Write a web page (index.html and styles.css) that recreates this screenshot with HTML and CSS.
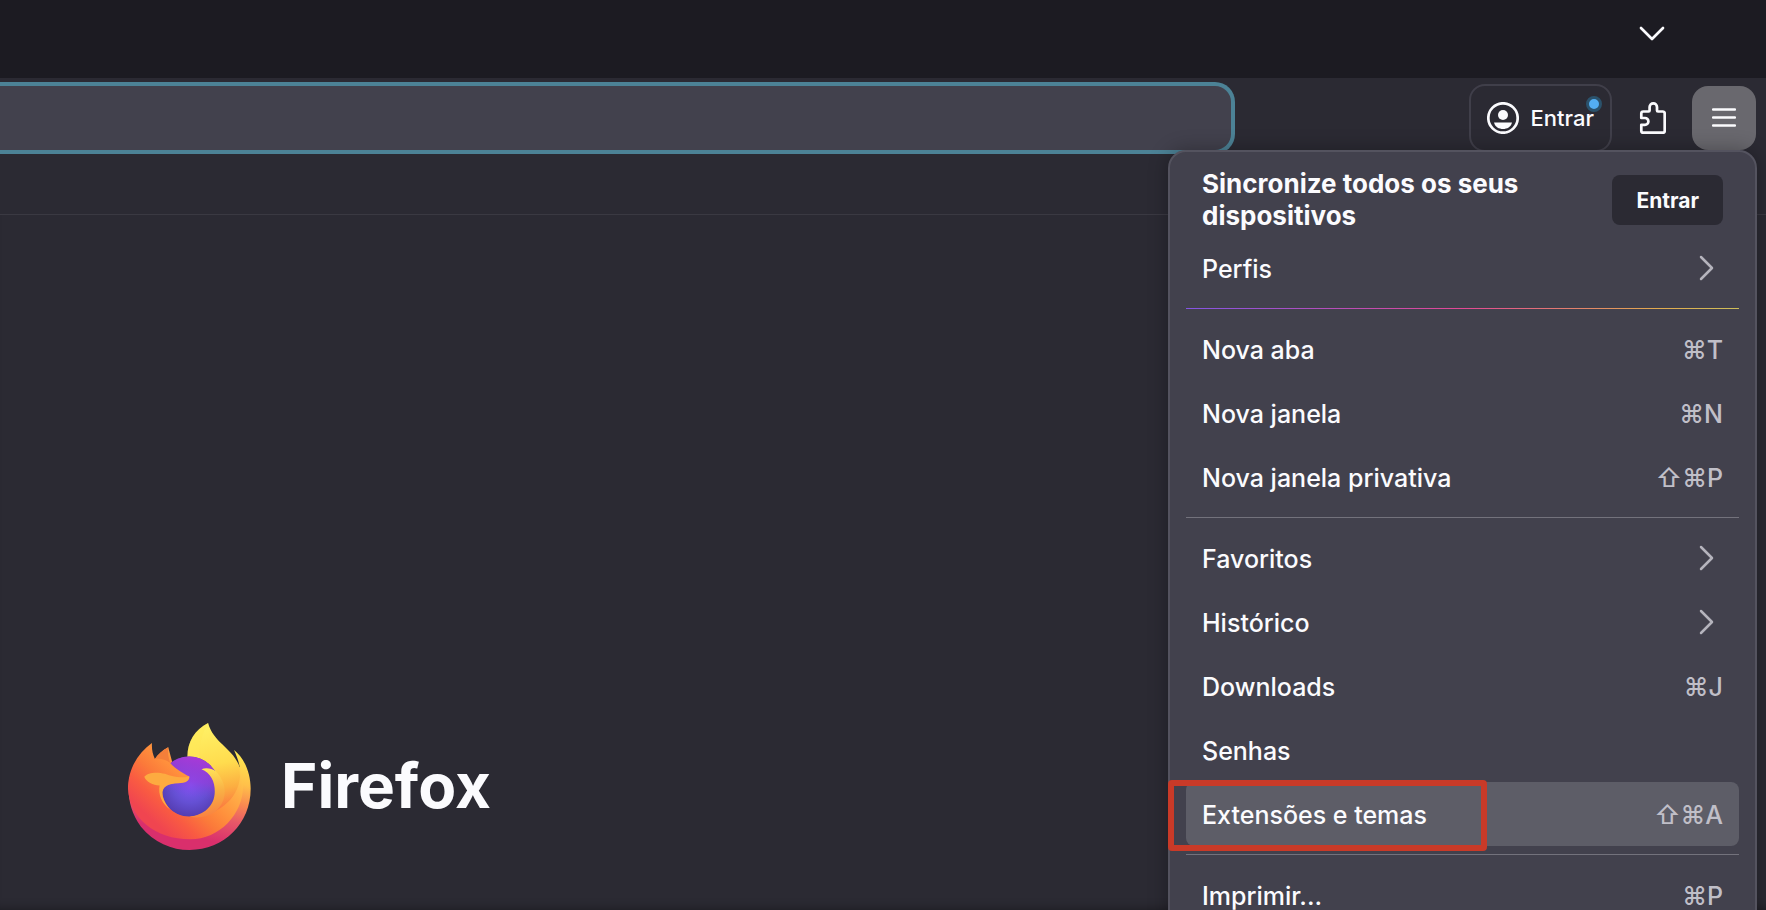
FILE: index.html
```html
<!DOCTYPE html>
<html lang="pt-BR">

<head>
    <meta charset="UTF-8">
    <meta name="viewport" content="width=device-width, initial-scale=1.0">
    <title>Firefox</title>
    <link rel="stylesheet" href="styles.css">
</head>

<body>
    <div class="tab-strip">
        <button class="toolbar-btn" aria-label="Listar abas">
            <svg width="26" height="16" viewBox="0 0 26 16"><path d="M2 2 L13 13 L24 2" class="line" /></svg>
        </button>
    </div>

    <div class="nav-bar">
        <input class="urlbar" type="text" aria-label="Endereço">
        <button class="signin">
            <svg width="32" height="32" viewBox="0 0 32 32">
                <circle cx="16" cy="16" r="14.7" class="line" />
                <circle cx="16" cy="13" r="5" fill="#fbfbfe" />
                <path d="M7 20.5 H25 C24 25 20 27 16 27 C12 27 8 25 7 20.5 Z" fill="#fbfbfe" />
            </svg>
            <span>Entrar</span>
            <i class="dot"></i>
        </button>
        <button class="toolbar-btn" aria-label="Extensões">
            <svg width="28" height="34" viewBox="0 0 28 34">
                <path d="M3.3 17 V12.5 Q3.3 10.5 5.3 10.5 H10.6 Q11.6 10.5 11.6 9.5 V6 A3.7 3.7 0 0 1 19 6 V9.5 Q19 10.5 20 10.5 H24.7 Q26.7 10.5 26.7 12.5 V29.7 Q26.7 31.7 24.7 31.7 H5.3 Q3.3 31.7 3.3 29.7 V23.8 H7 A3.4 3.4 0 0 0 7 17 Z" class="line" />
            </svg>
        </button>
        <button class="toolbar-btn open" aria-label="Menu">
            <svg width="24" height="20" viewBox="0 0 24 20"><path d="M1 1.5 H23 M1 9.5 H23 M1 17.5 H23" class="line thin" /></svg>
        </button>
    </div>

    <div class="bookmarks-bar"></div>

    <main class="page">
        <svg class="logo" viewBox="53 38 370 382">
            <defs>
                <linearGradient id="base" gradientUnits="userSpaceOnUse" x1="400" y1="120" x2="330" y2="400">
                    <stop offset="0" stop-color="#ffee50" />
                    <stop offset="0.35" stop-color="#ffc04a" />
                    <stop offset="0.55" stop-color="#f98a50" />
                    <stop offset="0.75" stop-color="#e85868" />
                    <stop offset="1" stop-color="#d92f6c" />
                </linearGradient>
                <linearGradient id="body" gradientUnits="userSpaceOnUse" x1="390" y1="150" x2="180" y2="380">
                    <stop offset="0" stop-color="#ffdd50" />
                    <stop offset="0.25" stop-color="#ffb048" />
                    <stop offset="0.5" stop-color="#ff8f3c" />
                    <stop offset="0.65" stop-color="#fb7a3a" />
                    <stop offset="0.82" stop-color="#f95b42" />
                    <stop offset="1" stop-color="#f04550" />
                </linearGradient>
                <linearGradient id="flame" x1="0.4" y1="0" x2="0.5" y2="1">
                    <stop offset="0" stop-color="#fff267" />
                    <stop offset="0.45" stop-color="#ffdc4e" />
                    <stop offset="0.72" stop-color="#fcae41" />
                    <stop offset="1" stop-color="#fb6a40" />
                </linearGradient>
                <linearGradient id="tail" x1="0.3" y1="0" x2="0.4" y2="1">
                    <stop offset="0" stop-color="#ffe65a" />
                    <stop offset="0.5" stop-color="#f9b045" />
                    <stop offset="1" stop-color="#f98240" />
                </linearGradient>
                <radialGradient id="globe" cx="0.52" cy="0.47" r="0.6">
                    <stop offset="0" stop-color="#8254f4" />
                    <stop offset="0.5" stop-color="#6550d4" />
                    <stop offset="1" stop-color="#5038a8" />
                </radialGradient>
                <linearGradient id="globeTop" x1="0.6" y1="0" x2="0.4" y2="1">
                    <stop offset="0" stop-color="#a93ad8" />
                    <stop offset="0.4" stop-color="#9a3bdc" stop-opacity="0.6" />
                    <stop offset="0.65" stop-color="#7b45dc" stop-opacity="0" />
                </linearGradient>
            </defs>
            <!-- outer ring -->
            <path fill="url(#base)" d="M58 200 C50 245 55 300 92 350 C130 398 185 420 238 420 C342 420 422 340 422 236 C422 190 404 144 372 119 C380 137 386 153 389 170 L330 250 L160 300 Z" />
            <!-- body -->
            <path fill="url(#body)" d="M125 98 C80 130 53 180 53 236 C58 325 135 388 240 388 C330 388 401 310 399 225 C399 200 395 180 389 170 L300 200 L190 170 L174 111 C156 120 142 134 134 146 C127 132 124 116 125 98 Z" />
            <path fill="#f47f3a" d="M174 111 C156 120 142 134 134 146 C150 146 164 150 180 158 C174 142 172 126 174 111 Z" />
            <!-- flame -->
            <path fill="url(#flame)" d="M294 38 C254 58 231 96 232 140 L280 240 L250 318 C320 318 384 270 390 200 L388 168 C367 112 310 98 294 38 Z" />
            <path fill="#ffe957" fill-opacity="0.5" d="M294 38 C254 58 231 96 232 140 L268 150 C266 110 272 72 294 38 Z" />
            <!-- globe -->
            <circle cx="237" cy="229" r="90" fill="url(#globe)" />
            <circle cx="237" cy="229" r="90" fill="url(#globeTop)" />
            <!-- tail over the globe -->
            <path fill="url(#tail)" d="M274 177 C287 172 304 174 318 184 C352 220 355 270 315 306 C290 322 262 326 238 319 C282 316 314 286 314 244 C315 215 301 187 274 177 Z" />
            <!-- head -->
            <path fill="url(#body)" d="M134 146 C150 144 165 147 180 158 C196 177 218 187 237 199 C240 207 228 217 205 218 C170 220 153 230 156 250 C160 278 180 304 210 316 L160 320 L100 240 Z" />
            <path fill="#fdab40" d="M102 200 C112 186 142 185 164 191 C190 201 213 205 237 198 C239 212 226 219 205 219 C175 219 154 229 157 254 C159 270 169 288 181 299 C155 282 143 252 148 226 C128 225 108 216 102 200 Z" />
        </svg>
        <h1>Firefox</h1>
    </main>

    <div class="app-menu">
        <div class="sync">
            <h2>Sincronize todos os seus dispositivos</h2>
            <button class="sync-btn">Entrar</button>
        </div>
        <button class="item">Perfis <svg class="arrow" width="16" height="26" viewBox="0 0 16 26"><path d="M2 2 L13 13 L2 24" /></svg></button>
        <hr class="rainbow">
        <button class="item">Nova aba <kbd>⌘T</kbd></button>
        <button class="item">Nova janela <kbd>⌘N</kbd></button>
        <button class="item">Nova janela privativa <kbd>⇧⌘P</kbd></button>
        <hr>
        <button class="item">Favoritos <svg class="arrow" width="16" height="26" viewBox="0 0 16 26"><path d="M2 2 L13 13 L2 24" /></svg></button>
        <button class="item">Histórico <svg class="arrow" width="16" height="26" viewBox="0 0 16 26"><path d="M2 2 L13 13 L2 24" /></svg></button>
        <button class="item">Downloads <kbd>⌘J</kbd></button>
        <button class="item">Senhas</button>
        <button class="item active">Extensões e temas <kbd>⇧⌘A</kbd><i class="highlight"></i></button>
        <hr>
        <button class="item">Imprimir... <kbd>⌘P</kbd></button>
    </div>
</body>

</html>
```

FILE: styles.css
```css
* {
    box-sizing: border-box;
}

body {
    margin: 0;
    height: 100vh;
    display: flex;
    flex-direction: column;
    position: relative;
    overflow: hidden;
    font-family: Inter, "Liberation Sans", sans-serif;
    color: #fbfbfe;
    background-color: #2b2a33;
}

button {
    font-family: inherit;
    color: inherit;
    background: none;
    border: none;
    padding: 0;
}

.line {
    fill: none;
    stroke: #fbfbfe;
    stroke-width: 2.7;
    stroke-linecap: round;
    stroke-linejoin: round;
}

.thin {
    stroke-width: 2.4;
}

.tab-strip {
    height: 78px;
    padding: 2px 82px 0 0;
    display: flex;
    justify-content: flex-end;
    background-color: #1c1b22;
}

.nav-bar {
    height: 80px;
    padding-right: 10px;
    display: flex;
    align-items: center;
    gap: 8px;
}

.urlbar {
    flex: 1;
    min-width: 0;
    height: 72px;
    margin-right: 226px;
    padding: 0 20px;
    border: 4px solid #4c8296;
    border-left: none;
    border-radius: 0 20px 20px 0;
    background-color: #42414d;
    color: #fbfbfe;
    font-size: 24px;
    outline: none;
}

.toolbar-btn {
    width: 64px;
    height: 64px;
    display: flex;
    align-items: center;
    justify-content: center;
    border-radius: 16px;
}

.toolbar-btn.open {
    background-color: #69686e;
}

.signin {
    position: relative;
    height: 68px;
    padding: 0 16px;
    display: flex;
    align-items: center;
    gap: 12px;
    border: 2px solid #403f4a;
    border-radius: 16px;
    font-size: 22px;
    font-weight: 500;
}

.dot {
    position: absolute;
    top: 10px;
    right: 8px;
    width: 16px;
    height: 16px;
    border: 3px solid #2b526c;
    border-radius: 50%;
    background-color: #53aef2;
}

.bookmarks-bar {
    height: 57px;
    border-bottom: 1px solid #3a3942;
}

.page {
    flex: 1;
    display: flex;
    align-items: flex-end;
    gap: 30px;
    padding: 0 128px 60px;
    box-shadow: inset 0 -10px 10px -8px rgba(0, 0, 0, 0.3);
}

.logo {
    width: 123px;
    height: 127px;
}

h1 {
    margin: 0 0 24px;
    font-size: 62px;
    line-height: 80px;
    font-weight: 700;
}

.app-menu {
    position: absolute;
    top: 150px;
    right: 9px;
    width: 589px;
    padding: 16px;
    border: 2px solid #54535f;
    border-radius: 18px;
    background-color: #42414d;
    box-shadow: 0 0 20px rgba(0, 0, 0, 0.3);
}

.sync {
    display: flex;
    align-items: center;
    justify-content: space-between;
    gap: 40px;
    padding: 0 16px;
    margin-bottom: 4px;
}

h2 {
    margin: 0;
    font-size: 26px;
    line-height: 32px;
    font-weight: 700;
}

.sync-btn {
    height: 50px;
    padding: 0 24px;
    border-radius: 8px;
    background-color: #2b2a33;
    font-size: 21px;
    font-weight: 700;
}

.item {
    position: relative;
    width: 100%;
    height: 64px;
    padding: 2px 16px 0;
    display: flex;
    align-items: center;
    justify-content: space-between;
    border-radius: 8px;
    font-size: 25px;
    font-weight: 500;
}

.item.active {
    background-color: #5d5d67;
}

kbd {
    font-family: inherit;
    color: #c0bfc8;
}

.arrow {
    margin: 0 8px 2px 0;
    fill: none;
    stroke: #b5b4bd;
    stroke-width: 2.5;
    stroke-linecap: round;
    stroke-linejoin: round;
}

hr {
    height: 1px;
    margin: 8px 0;
    border: none;
    background-color: #73727c;
}

.rainbow {
    background: linear-gradient(90deg, #9059ff, #ff4aa2 50%, #ffbd4f 85%, #e6d45c);
    opacity: 0.85;
}

/* red frame around the selected entry */
.highlight {
    position: absolute;
    top: -2px;
    left: -18px;
    width: 319px;
    height: 71px;
    border: 6px solid #c93a28;
    border-radius: 4px;
}
```
